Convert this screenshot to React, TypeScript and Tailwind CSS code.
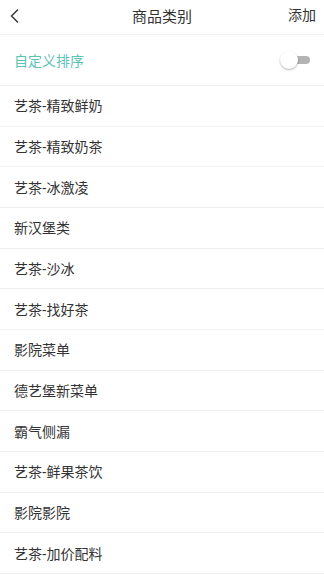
import React from 'react';

const categories = [
  '艺茶-精致鲜奶',
  '艺茶-精致奶茶',
  '艺茶-冰激凌',
  '新汉堡类',
  '艺茶-沙冰',
  '艺茶-找好茶',
  '影院菜单',
  '德艺堡新菜单',
  '霸气侧漏',
  '艺茶-鲜果茶饮',
  '影院影院',
  '艺茶-加价配料',
];

export default function App() {
  return (
    <div
      className="w-[324px] h-[576px] overflow-hidden bg-white text-[#333333]"
      style={{ fontFamily: '"Noto Sans", "Noto Sans CJK SC", sans-serif' }}
    >
      {/* Header */}
      <div className="relative flex items-center justify-between h-[35px] border-b border-[#f2f2f2] px-[8px]">
        <svg width="12" height="16" viewBox="0 0 12 16" className="ml-[1px] mb-[3px]">
          <path d="M9 1.5 L2.5 8 L9 14.5" fill="none" stroke="#333" strokeWidth="1.4" />
        </svg>
        <span className="absolute left-1/2 -translate-x-1/2 top-[5px] text-[15px] leading-[22px] text-[#333]">
          商品类别
        </span>
        <span className="text-[14px] leading-[20px] mb-[4px] mr-[0px] text-[#333]">添加</span>
      </div>

      {/* Custom sort */}
      <div className="flex items-center justify-between h-[51px] border-b border-[#efefef] pl-[14px] pr-[14px]">
        <span className="text-[14px] text-[#5cc2b3]">自定义排序</span>
        <div className="relative w-[30px] h-[18px] mr-[0px]">
          <div className="absolute left-[3px] right-[0px] top-[5px] h-[8px] rounded-full bg-[#b3b3b3]" />
          <div className="absolute left-0 top-0 w-[18px] h-[18px] rounded-full bg-white shadow-[0_1px_2px_rgba(0,0,0,0.3)]" />
        </div>
      </div>

      {/* Category list */}
      <div className="flex flex-col">
        {categories.map((c) => (
          <div
            key={c}
            className="flex items-center h-[40.67px] border-b border-[#f0f0f0] pl-[14px]"
          >
            <span className="text-[14px] text-[#333]">{c}</span>
          </div>
        ))}
      </div>
    </div>
  );
}
